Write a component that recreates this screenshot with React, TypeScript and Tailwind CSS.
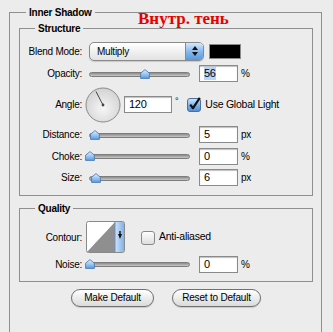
import React from 'react'

const border = 'border-[#8f8f8f]'

function Thumb({ x }: { x: number }) {
  // thumb center measured from the left end of the track
  return (
    <svg
      width="10"
      height="10"
      viewBox="0 0 10 10"
      className="absolute top-[1px]"
      style={{ left: x - 5 }}
    >
      <defs>
        <linearGradient id="thumbGrad" x1="0" y1="0" x2="0" y2="1">
          <stop offset="0" stopColor="#e6f2ff" />
          <stop offset="0.5" stopColor="#9cc8f4" />
          <stop offset="1" stopColor="#5d9be0" />
        </linearGradient>
      </defs>
      <path d="M5 0.6 L9.4 4.2 L9.4 9.4 L0.6 9.4 L0.6 4.2 Z" fill="url(#thumbGrad)" stroke="#4d7cb4" strokeWidth="0.9" />
    </svg>
  )
}

function Slider({ pos }: { pos: number }) {
  return (
    <div className="relative w-[101px] h-[12px]">
      <div className="absolute left-0 right-0 top-[4px] h-[5px] rounded-full border border-[#7d7d7d] bg-linear-to-b from-[#8c8c8c] to-[#c9c9c9]" />
      <Thumb x={pos} />
    </div>
  )
}

function NumberBox({ value, width = 'w-[39px]', selected = false }: { value: string; width?: string; selected?: boolean }) {
  return (
    <div className={`${width} h-[17px] bg-white border border-[#8a8a8a] shadow-[inset_0_1px_1px_rgba(0,0,0,0.25)] flex items-center pl-[4px]`}>
      <span className={`text-[11px] leading-[13px] ${selected ? 'bg-[#b5d5ff]' : ''}`}>{value}</span>
    </div>
  )
}

function Label({ children }: { children: React.ReactNode }) {
  return <div className="w-[62px] text-right shrink-0">{children}</div>
}

function SliderRow({ label, pos, value, unit, h, selected }: { label: string; pos: number; value: string; unit: string; h: string; selected?: boolean }) {
  return (
    <div className={`flex items-center ${h}`}>
      <Label>{label}</Label>
      <div className="ml-[7px]">
        <Slider pos={pos} />
      </div>
      <div className="ml-[9px]">
        <NumberBox value={value} selected={selected} />
      </div>
      <span className="ml-[3px]">{unit}</span>
    </div>
  )
}

function CheckBox({ checked }: { checked: boolean }) {
  return (
    <svg width="15" height="15" viewBox="0 0 15 15">
      <defs>
        <linearGradient id={checked ? 'cbOn' : 'cbOff'} x1="0" y1="0" x2="0" y2="1">
          {checked ? (
            <>
              <stop offset="0" stopColor="#d5e8fb" />
              <stop offset="0.5" stopColor="#7fb3ea" />
              <stop offset="1" stopColor="#4f8fd6" />
            </>
          ) : (
            <>
              <stop offset="0" stopColor="#ffffff" />
              <stop offset="1" stopColor="#dcdcdc" />
            </>
          )}
        </linearGradient>
      </defs>
      <rect x="0.5" y="1.5" width="13" height="13" rx="2.5" fill={`url(#${checked ? 'cbOn' : 'cbOff'})`} stroke={checked ? '#4a6f9c' : '#8a8a8a'} />
      {checked && <path d="M3.2 7.6 L6 11.2 L12.8 0.8" fill="none" stroke="#111" strokeWidth="2.2" strokeLinejoin="round" />}
    </svg>
  )
}

function Dial() {
  return (
    <svg width="36" height="36" viewBox="0 0 36 36">
      <defs>
        <radialGradient id="dialGrad" cx="0.5" cy="0.6" r="0.6">
          <stop offset="0" stopColor="#f6f6f6" />
          <stop offset="1" stopColor="#d2d2d2" />
        </radialGradient>
      </defs>
      <circle cx="18" cy="18" r="17" fill="url(#dialGrad)" stroke="#8a8a8a" />
      <line x1="18" y1="18" x2="11" y2="4.5" stroke="#444" strokeWidth="1" />
      <circle cx="18" cy="18" r="1.4" fill="#444" />
    </svg>
  )
}

function BlendSelect() {
  return (
    <div className="w-[115px] h-[19px] rounded-[5px] border border-[#8a8a8a] bg-linear-to-b from-white to-[#e2e2e2] flex overflow-hidden shadow-[0_1px_1px_rgba(0,0,0,0.15)]">
      <span className="flex-1 pl-[7px] text-[10px] leading-[17px]">Multiply</span>
      <div className="w-[18px] h-full border-l border-[#6c8fbd] bg-linear-to-b from-[#d6e9fc] via-[#86b9ee] to-[#5a98dc] flex flex-col items-center justify-center gap-[2px]">
        <svg width="6" height="4" viewBox="0 0 6 4"><path d="M3 0 L6 4 L0 4 Z" fill="#111" /></svg>
        <svg width="6" height="4" viewBox="0 0 6 4"><path d="M0 0 L6 0 L3 4 Z" fill="#111" /></svg>
      </div>
    </div>
  )
}

function ContourBox() {
  return (
    <svg width="39" height="32" viewBox="0 0 39 32">
      <defs>
        <linearGradient id="contourBlue" x1="0" y1="0" x2="1" y2="0">
          <stop offset="0" stopColor="#cfe4fa" />
          <stop offset="1" stopColor="#7fb2ea" />
        </linearGradient>
      </defs>
      <rect x="0.5" y="0.5" width="38" height="31" rx="2" fill="#fff" stroke="#8a8a8a" />
      <path d="M1 31 L29 1 L29 31 Z" fill="#8f8f8f" />
      <rect x="29" y="1" width="9" height="30" fill="url(#contourBlue)" />
      <line x1="29" y1="1" x2="29" y2="31" stroke="#6c8fbd" />
      <path d="M32 13 L36 13 L34 18 Z" fill="#111" />
      <line x1="34" y1="10" x2="34" y2="14" stroke="#111" strokeWidth="1.4" />
    </svg>
  )
}

function PillButton({ children, width }: { children: React.ReactNode; width: string }) {
  return (
    <button className={`${width} h-[18px] rounded-full border border-[#707070] bg-linear-to-b from-white to-[#dadada] text-[10px] leading-[16px] tracking-[-0.2px] shadow-[0_1px_1px_rgba(0,0,0,0.15)]`}>
      {children}
    </button>
  )
}

// group title laid over the top border line
function GroupTitle({ children, left }: { children: React.ReactNode; left: string }) {
  return (
    <div className={`absolute top-[-7px] ${left} px-[3px] bg-[#ececec] font-bold leading-[13px]`}>
      {children}
    </div>
  )
}

export default function App() {
  return (
    <div className="relative w-[333px] h-[332px] overflow-hidden bg-[#ececec] pt-[12px] text-black text-[10px] tracking-[-0.25px] font-['Liberation_Sans',Arial,sans-serif]">
      <div className={`relative ml-[9px] w-[313px] h-[330px] border border-b-0 ${border}`}>
        <GroupTitle left="left-[16px]">Inner Shadow</GroupTitle>

        <div className={`relative mt-[15px] ml-[9px] w-[294px] border pt-[11px] pb-[7px] ${border}`}>
          <GroupTitle left="left-[15px]">Structure</GroupTitle>
          <div className="flex items-center h-[22px]">
            <Label>Blend Mode:</Label>
            <div className="ml-[7px]">
              <BlendSelect />
            </div>
            <div className="ml-[5px] w-[32px] h-[15px] bg-black border border-[#8a8a8a]" />
          </div>
          <SliderRow label="Opacity:" pos={56} value="56" unit="%" h="h-[23px]" selected />
          <div className="flex items-center h-[39px]">
            <Label>Angle:</Label>
            <div className="ml-[3px]">
              <Dial />
            </div>
            <div className="ml-[3px]">
              <NumberBox value="120" width="w-[48px]" />
            </div>
            <span className="ml-[3px] self-start mt-[10px] text-[9px]">°</span>
            <div className="ml-[9px] flex items-center">
              <CheckBox checked />
            </div>
            <span className="ml-[3px] text-[10.5px]">Use Global Light</span>
          </div>
          <SliderRow label="Distance:" pos={6} value="5" unit="px" h="h-[21px]" />
          <SliderRow label="Choke:" pos={1} value="0" unit="%" h="h-[22px]" />
          <SliderRow label="Size:" pos={7} value="6" unit="px" h="h-[21px]" />
        </div>

        <div className={`relative mt-[12px] ml-[9px] w-[294px] border pt-[12px] pb-[6px] ${border}`}>
          <GroupTitle left="left-[15px]">Quality</GroupTitle>
          <div className="flex items-center h-[32px]">
            <Label>Contour:</Label>
            <div className="ml-[4px] flex">
              <ContourBox />
            </div>
            <div className="ml-[16px] flex items-center">
              <CheckBox checked={false} />
            </div>
            <span className="ml-[3px] text-[10.5px]">Anti-aliased</span>
          </div>
          <SliderRow label="Noise:" pos={1} value="0" unit="%" h="h-[22px]" />
        </div>

        <div className="mt-[7px] flex justify-center gap-[18px] pl-[1px]">
          <PillButton width="w-[83px]">Make Default</PillButton>
          <PillButton width="w-[89px]">Reset to Default</PillButton>
        </div>
      </div>

      <div className="absolute left-[138px] top-[10px] text-[17px] leading-[17px] font-bold tracking-normal text-[#e80000] font-['Liberation_Serif','Times_New_Roman',serif]">
        Внутр. тень
      </div>
    </div>
  )
}
